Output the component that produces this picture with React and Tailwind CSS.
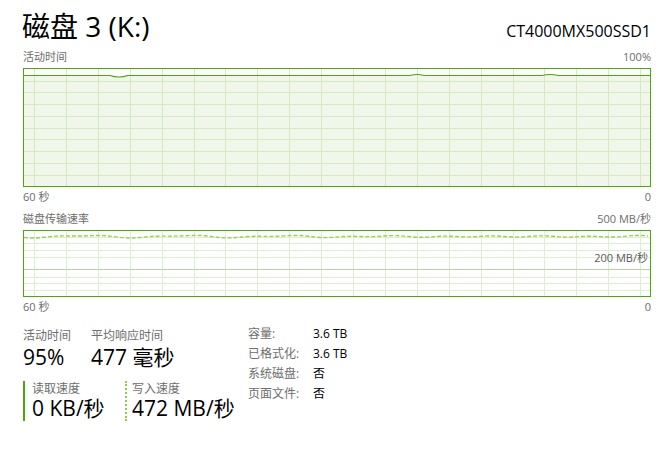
import React from "react";

const FONT = { fontFamily: '"Open Sans", "Noto Sans CJK SC", sans-serif' };

const GRAPH_W = 626;
const VLINES = Array.from({ length: 20 }, (_, i) => Math.round(10 + i * 31.9) + 0.5);

// activity graph: inner height 117
const ACT_H = 117;
const ACT_HLINES = [12, 23, 35, 47, 59, 70, 82, 94, 106];
const ACT_LINE =
  "M0 6.5 L86 6.5 Q95 9.5 104 6.5 L386 6.5 Q393 4.5 400 6.5 L518 6.5 Q526 4.5 534 6.5 L626 6.5";

// transfer graph: inner height 65
const TR_H = 65;
const TR_HLINES = [6, 12, 19, 26, 46, 52, 59];

function wave() {
  const pts = [];
  for (let x = 0; x <= GRAPH_W; x += 4) {
    const y =
      5.5 +
      1.1 * Math.sin(x / 10.2 + 0.6) * Math.cos(x / 31.9) +
      0.5 * Math.sin(x / 17 + 1.3);
    pts.push(`${x},${y.toFixed(2)}`);
  }
  return "M" + pts.join(" L");
}
const WAVE = wave();

function ActivityGraph() {
  return (
    <div className="h-[119px] border border-[#4ca60c] bg-white">
      <svg width={GRAPH_W} height={ACT_H} className="block">
        <path d={ACT_LINE + ` L626 ${ACT_H} L0 ${ACT_H} Z`} fill="#f0f7ea" />
        {VLINES.map((x) => (
          <line key={x} x1={x} x2={x} y1={0} y2={ACT_H} stroke="#d3eac3" shapeRendering="crispEdges" />
        ))}
        {ACT_HLINES.map((y) => (
          <line key={y} x1={0} x2={GRAPH_W} y1={y + 0.5} y2={y + 0.5} stroke="#d3eac3" shapeRendering="crispEdges" />
        ))}
        <path d={ACT_LINE} fill="none" stroke="#4ca60c" strokeWidth="1.2" />
      </svg>
    </div>
  );
}

function TransferGraph() {
  return (
    <div className="relative h-[67px] border border-[#4ca60c] bg-white">
      <svg width={GRAPH_W} height={TR_H} className="block">
        {VLINES.map((x) => (
          <line key={x} x1={x} x2={x} y1={0} y2={TR_H} stroke="#dcefd0" shapeRendering="crispEdges" />
        ))}
        {TR_HLINES.map((y) => (
          <line key={y} x1={0} x2={GRAPH_W} y1={y + 0.5} y2={y + 0.5} stroke="#dcefd0" shapeRendering="crispEdges" />
        ))}
        <line x1={0} x2={GRAPH_W} y1={38.5} y2={38.5} stroke="#b5d6a0" shapeRendering="crispEdges" />
        <path d={WAVE} fill="none" stroke="#96d14e" strokeWidth="1.4" strokeDasharray="4 2" />
      </svg>
      <span className="absolute right-[2px] top-[20px] text-[11px] leading-[14px] text-[#5a5a5a]">
        200 MB/秒
      </span>
    </div>
  );
}

function Row({ left, right }) {
  return (
    <div className="flex h-[14px] items-center justify-between text-[11px] leading-[14px] text-[#6d6d6d]">
      <span>{left}</span>
      <span>{right}</span>
    </div>
  );
}

const INFO = [
  ["容量:", "3.6 TB"],
  ["已格式化:", "3.6 TB"],
  ["系统磁盘:", "否"],
  ["页面文件:", "否"],
];

export default function App() {
  return (
    <div style={FONT} className="h-[454px] w-[668px] overflow-hidden bg-white pl-[23px] pr-[17px] text-black">
      <div className="flex h-[44px] items-baseline justify-between pt-[8px]">
        <span className="-ml-[1px] text-[28px] leading-[36px]">磁盘 3 (K:)</span>
        <span className="text-[16px] leading-[22px]">CT4000MX500SSD1</span>
      </div>

      <div className="mt-[6px]">
        <Row left="活动时间" right="100%" />
      </div>
      <div className="mt-[4px]">
        <ActivityGraph />
      </div>
      <div className="mt-[3px]">
        <Row left="60 秒" right="0" />
      </div>

      <div className="mt-[8px]">
        <Row left="磁盘传输速率" right="500 MB/秒" />
      </div>
      <div className="mt-[4px]">
        <TransferGraph />
      </div>
      <div className="mt-[3px]">
        <Row left="60 秒" right="0" />
      </div>

      <div className="mt-[13px] flex">
        <div className="w-[225px]">
          <div className="flex">
            <div className="w-[68px]">
              <div className="text-[12px] leading-[17px] text-[#6d6d6d]">活动时间</div>
              <div className="text-[21px] leading-[26px]">95%</div>
            </div>
            <div>
              <div className="text-[12px] leading-[17px] text-[#6d6d6d]">平均响应时间</div>
              <div className="text-[21px] leading-[26px]">477 毫秒</div>
            </div>
          </div>
          <div className="mt-[11px] flex">
            <div className="h-[40px] w-[102px] border-l-2 border-[#4ca60c] pl-[7px]">
              <div className="text-[12px] leading-[15px] text-[#6d6d6d]">读取速度</div>
              <div className="text-[21px] leading-[25px]">0 KB/秒</div>
            </div>
            <div className="h-[40px] border-l-2 border-dotted border-[#8dd23f] pl-[5px]">
              <div className="text-[12px] leading-[15px] text-[#6d6d6d]">写入速度</div>
              <div className="text-[21px] leading-[25px]">472 MB/秒</div>
            </div>
          </div>
        </div>
        <div className="-mt-[3px]">
          {INFO.map(([k, v]) => (
            <div key={k} className="flex h-[20px] items-center text-[12px]">
              <span className="w-[65px] text-[#6d6d6d]">{k}</span>
              <span>{v}</span>
            </div>
          ))}
        </div>
      </div>
    </div>
  );
}
